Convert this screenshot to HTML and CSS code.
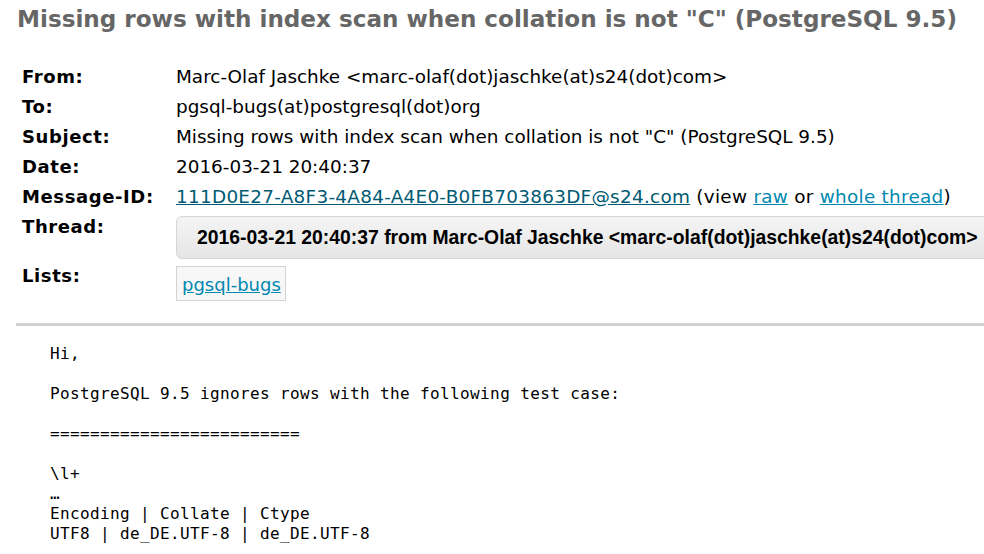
FILE: index.html
```html
<!DOCTYPE html>
<html>
<head>
<meta charset="utf-8">
<link rel="stylesheet" href="styles.css">
</head>
<body>
<h1 class="subject-title">Missing rows with index scan when collation is not "C" (PostgreSQL 9.5)</h1>
<div class="message-header">
  <div class="label">From:</div><div class="value">Marc-Olaf Jaschke &lt;marc-olaf(dot)jaschke(at)s24(dot)com&gt;</div>
  <div class="label">To:</div><div class="value">pgsql-bugs(at)postgresql(dot)org</div>
  <div class="label">Subject:</div><div class="value">Missing rows with index scan when collation is not "C" (PostgreSQL 9.5)</div>
  <div class="label">Date:</div><div class="value">2016-03-21 20:40:37</div>
  <div class="label">Message-ID:</div><div class="value msgid-row"><a class="msgid" href="#">111D0E27-A8F3-4A84-A4E0-B0FB703863DF@s24.com</a> (view <a class="lnk" href="#">raw</a> or <a class="lnk" href="#">whole thread</a>)</div>
  <div class="label">Thread:</div><div class="value"><div class="thread-box">2016-03-21 20:40:37 from Marc-Olaf Jaschke &lt;marc-olaf(dot)jaschke(at)s24(dot)com&gt;</div></div>
  <div class="label">Lists:</div><div class="value"><span class="list-box"><a class="lnk" href="#">pgsql-bugs</a></span></div>
</div>
<div class="divider"></div>
<pre class="body-text">Hi,

PostgreSQL 9.5 ignores rows with the following test case:

=========================

\l+
…
Encoding | Collate | Ctype
UTF8 | de_DE.UTF-8 | de_DE.UTF-8
</pre>
</body>
</html>
```
FILE: styles.css
```css
html, body {
  margin: 0;
  padding: 0;
  background: #fff;
  overflow: hidden;
}
body {
  font-family: "DejaVu Sans", sans-serif;
  color: #000;
  width: 984px;
}
.subject-title {
  margin: 4px 0 0 17px;
  font-size: 23.1px;
  line-height: 30px;
  font-weight: bold;
  color: #666;
  white-space: nowrap;
}
.message-header {
  margin: 28px 0 0 22px;
  display: grid;
  grid-template-columns: 154px 1fr;
  font-size: 18.4px;
  white-space: nowrap;
  line-height: 30px;
}
.label {
  font-weight: bold;
  font-size: 18px;
  letter-spacing: 0.6px;
}
.value {
  min-width: 0;
}
.msgid-row {
  letter-spacing: 0.28px;
}
.msgid {
  color: #005a73;
}
.lnk {
  color: #0088b0;
}
.thread-box {
  margin: 4px 0 2px 0;
  height: 41px;
  line-height: 41px;
  padding-left: 20px;
  width: 900px;
  letter-spacing: 0;
  border: 1px solid #d6d6d6;
  border-radius: 6px;
  background: linear-gradient(#f4f4f4, #e6e6e6);
  font-family: "Liberation Sans", Arial, sans-serif;
  font-weight: bold;
  font-size: 19.35px;
}
.list-box {
  display: inline-block;
  margin-top: 5px;
  height: 33px;
  line-height: 36px;
  padding: 0 4px 0 5px;
  border: 1px solid #d4d4d4;
  background: #f7f7f7;
  font-size: 18px;
}
.divider {
  margin: 22px 0 0 16px;
  height: 3px;
  background: #d0d0d0;
}
.body-text {
  margin: 18px 0 0 50px;
  font-family: "DejaVu Sans Mono", monospace;
  font-size: 16px;
  line-height: 20px;
  letter-spacing: 0.37px;
}
```
